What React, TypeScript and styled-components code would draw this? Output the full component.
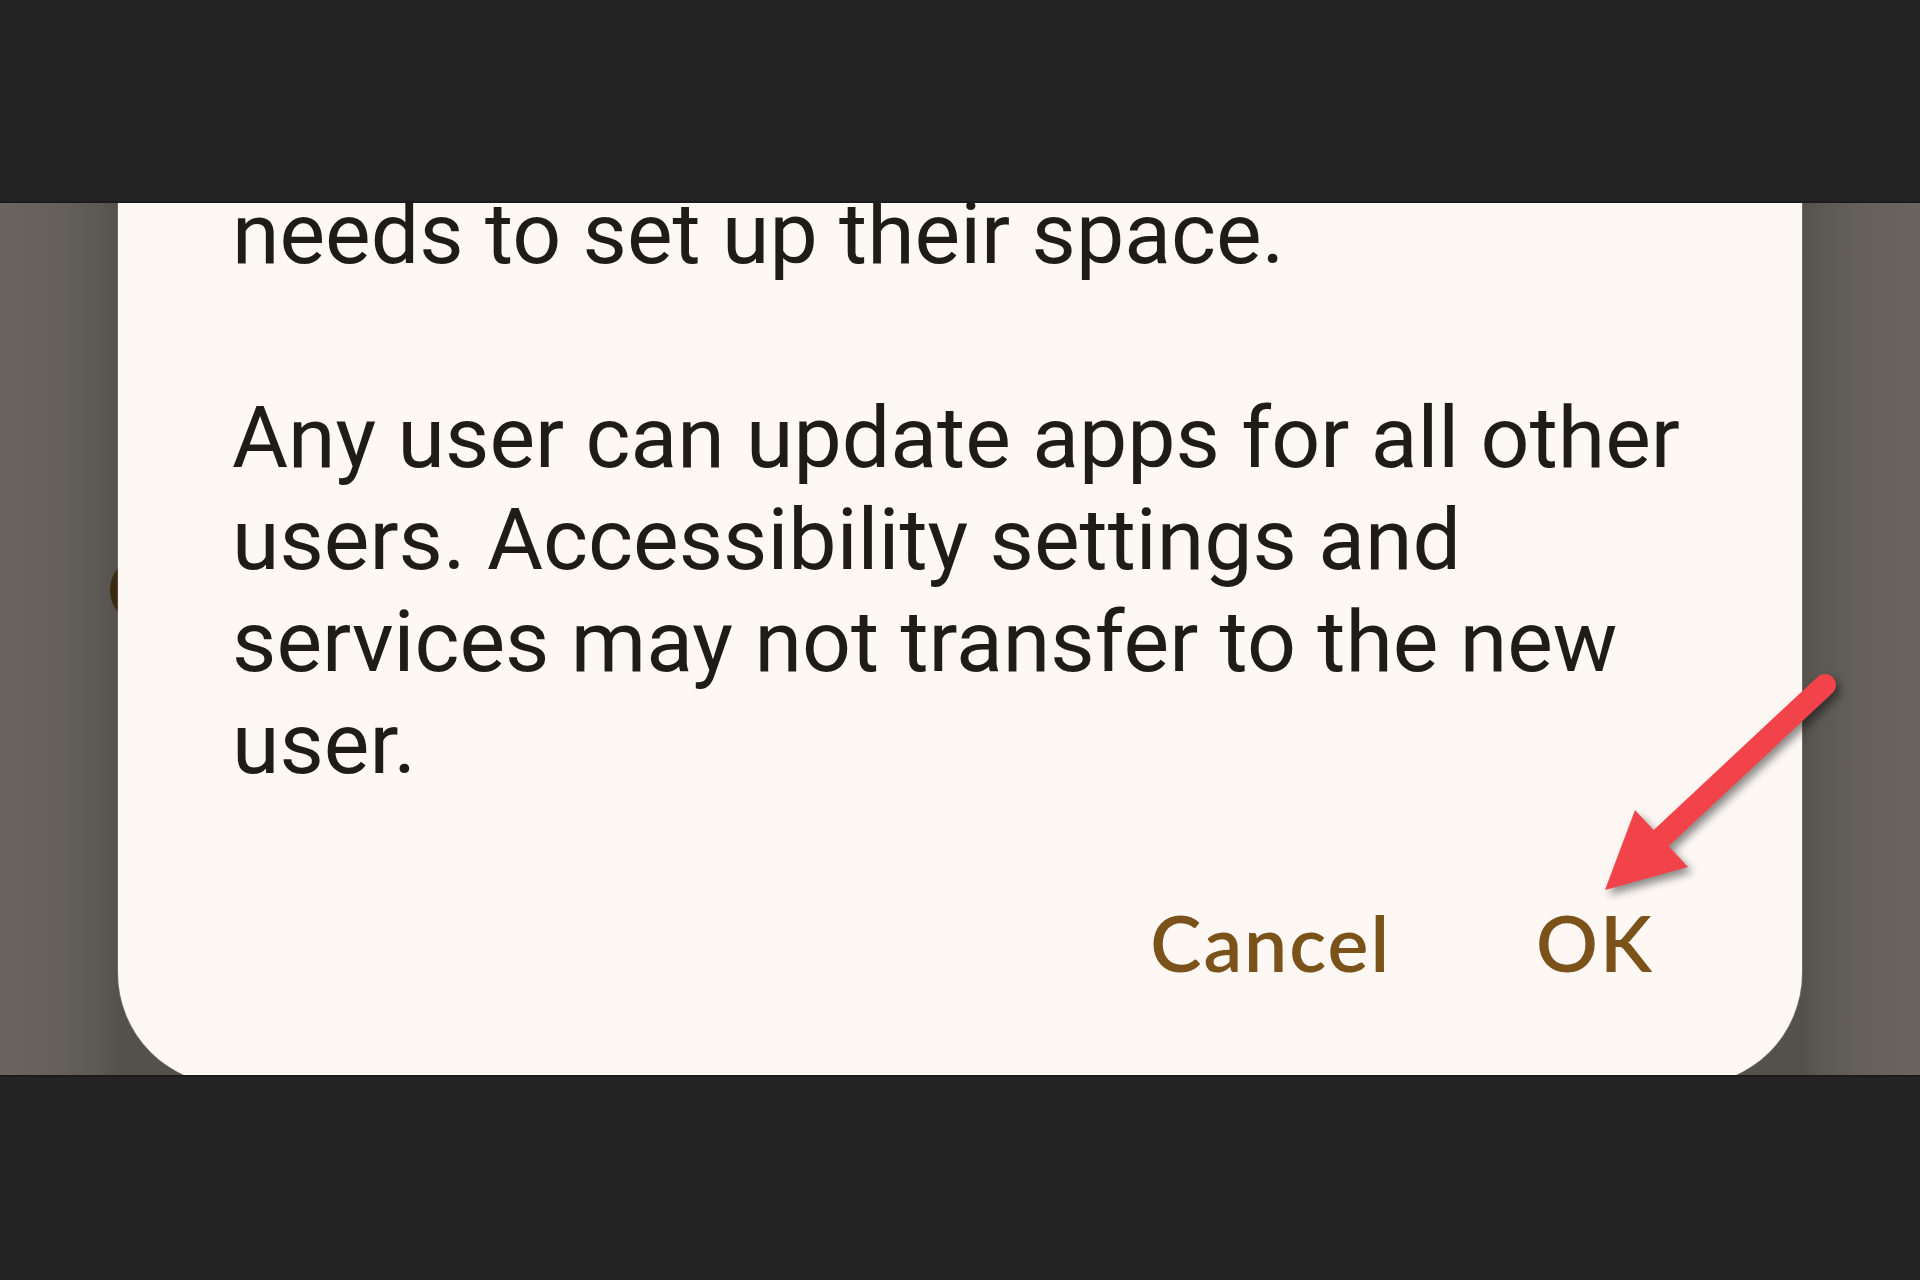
import React from "react";
import styled, { createGlobalStyle } from "styled-components";

const GlobalStyle = createGlobalStyle`
  html, body {
    margin: 0;
    padding: 0;
    background: #242424;
  }
  #root {
    width: 1920px;
    height: 1280px;
  }
`;

const Page = styled.div`
  position: relative;
  width: 1920px;
  height: 1280px;
  display: grid;
  grid-template-rows: 203px 872px 205px;
  background: #242424;
  overflow: hidden;
`;

const Band = styled.div<{ $edge: "top" | "bottom" }>`
  background: #242424;
  ${(p) =>
    p.$edge === "top"
      ? "box-shadow: inset 0 -2px 0 #1b1b1b;"
      : "box-shadow: inset 0 2px 0 #1b1b1b;"}
`;

const Stage = styled.div`
  display: grid;
  grid-template: 1fr / 1fr;
  overflow: hidden;
`;

const Backdrop = styled.div`
  grid-area: 1 / 1;
  background: linear-gradient(
    to right,
    #69645e 0px,
    #65605a 60px,
    #5c5853 100px,
    #54504b 118px,
    #54504b 1802px,
    #5c5853 1822px,
    #65605a 1860px,
    #69645e 1920px
  );
  padding: 353px 0 0 110px;
`;

const BehindIcon = styled.div`
  width: 68px;
  height: 68px;
  box-sizing: border-box;
  border-radius: 50%;
  border: 9px solid #3a2b12;
`;

const DialogLayer = styled.div`
  grid-area: 1 / 1;
  display: flex;
  flex-direction: column;
  justify-content: flex-end;
  padding: 0 118px;
  overflow: hidden;
`;

const Dialog = styled.div`
  flex-shrink: 0;
  margin-bottom: -10px;
  background: #fdf8f4;
  border-radius: 0 0 112px 112px;
  padding: 0 60px 104px 114px;
  box-shadow: -1px 0 0 rgba(255, 255, 255, 0.15), 1px 0 0 rgba(255, 255, 255, 0.15);
`;

const Body = styled.p`
  margin: 0 0 102px;
  font-family: "Roboto", "Liberation Sans", sans-serif;
  font-weight: 400;
  font-size: 86px;
  line-height: 102px;
  color: #1f1c18;
  &:last-of-type {
    margin-bottom: 0;
  }
`;

const Actions = styled.div`
  display: flex;
  justify-content: flex-end;
  align-items: center;
  gap: 145px;
  margin-top: 109px;
  padding-right: 88px;
`;

const ActionButton = styled.button`
  border: none;
  background: transparent;
  padding: 0;
  margin: 0;
  font-family: "Lato", "Open Sans", sans-serif;
  font-weight: 600;
  font-size: 77px;
  line-height: 77px;
  letter-spacing: 2px;
  color: #7b5219;
  cursor: pointer;
`;

const ArrowSvg = styled.svg`
  position: absolute;
  left: 1580px;
  top: 660px;
  width: 280px;
  height: 260px;
  overflow: visible;
  filter: drop-shadow(4px 5px 4px rgba(0, 0, 0, 0.45));
`;

export default function App() {
  return (
    <>
      <GlobalStyle />
      <Page>
        <Band $edge="top" />
        <Stage>
          <Backdrop>
            <BehindIcon />
          </Backdrop>
          <DialogLayer>
            <Dialog role="dialog" aria-label="Add new user?">
              <Body>needs to set up their space.</Body>
              <Body>
                Any user can update apps for all other users. Accessibility
                settings and services may not transfer to the new user.
              </Body>
              <Actions>
                <ActionButton type="button">Cancel</ActionButton>
                <ActionButton type="button">OK</ActionButton>
              </Actions>
            </Dialog>
          </DialogLayer>
        </Stage>
        <Band $edge="bottom" />
        <ArrowSvg viewBox="0 0 280 260" aria-hidden="true">
          <line
            x1="245"
            y1="25"
            x2="78"
            y2="181"
            stroke="#f2434a"
            strokeWidth="22"
            strokeLinecap="round"
          />
          <polygon points="25,230 55,150 108,207" fill="#f2434a" />
        </ArrowSvg>
      </Page>
    </>
  );
}
